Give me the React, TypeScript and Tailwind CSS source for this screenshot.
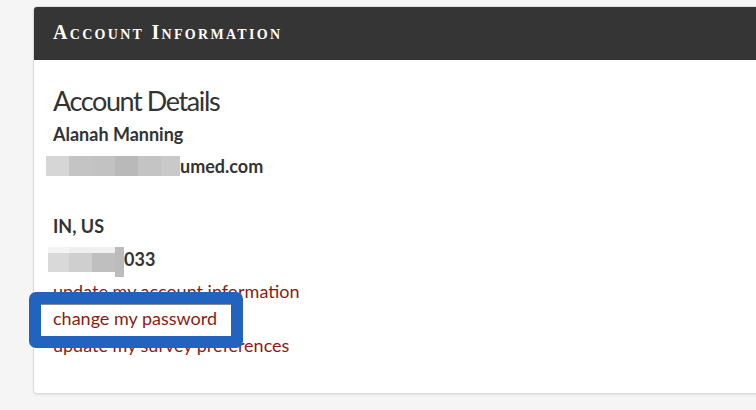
const sans = "font-['Lato','Liberation_Sans',sans-serif]";

const Pixels = ({ cols }: { cols: string[] }) => (
  <span className="inline-flex">
    {cols.map((c, i) => (
      <span key={i} className="h-[20px] w-[23px]" style={{ backgroundColor: c }} />
    ))}
  </span>
);

export default function App() {
  return (
    <div className={`relative h-[410px] w-full overflow-hidden bg-[#f5f5f5] pl-[33px] pt-[6px] ${sans}`}>
      <div className="w-[760px] rounded-[4px] border border-[#dcdcdc] bg-white shadow-[0_1px_2px_rgba(0,0,0,0.08)]">
        <div className="flex h-[53px] items-center rounded-t-[3px] bg-[#353535] pb-[3px] pl-[19px]">
          <h2 className="font-['Liberation_Serif',serif] text-[20px] font-bold tracking-[2.3px] text-white [font-variant:small-caps]">
            Account Information
          </h2>
        </div>
        <div className="h-[333px] pl-[19px] pt-[24px] text-[#333]">
          <h3 className="text-[27px] font-normal leading-[34px] tracking-[-1.4px] text-[#333]">Account Details</h3>
          <p className="text-[18px] font-bold leading-[32px]">Alanah Manning</p>
          <p className="flex items-center text-[18px] font-bold leading-[32px]">
            <span className="-ml-[7px] inline-flex">
              <Pixels cols={["#d6d6d6", "#c4c4c4", "#c2c2c2", "#b9b9b9", "#c4c4c4"]} />
              <span className="h-[20px] w-[19px] bg-[#c9c9c9]" />
            </span>
            <span>umed.com</span>
          </p>
          <p className="mt-[28px] text-[18px] font-bold leading-[32px]">IN, US</p>
          <p className="mt-[1px] flex items-center text-[18px] font-bold leading-[32px]">
            <span className="-ml-[5px] inline-flex h-[25px] items-start">
              <span className="flex h-[25px] w-[21px] flex-col"><span className="h-[6px] bg-[#f4f4f4]" /><span className="flex-1 bg-[#d9d9d9]" /></span>
              <span className="flex h-[25px] w-[23px] flex-col"><span className="h-[6px] bg-[#efefef]" /><span className="flex-1 bg-[#cfcfcf]" /></span>
              <span className="flex h-[25px] w-[23px] flex-col"><span className="h-[6px] bg-[#f0f0f0]" /><span className="flex-1 bg-[#bfbfbf]" /></span>
              <span className="h-[30px] w-[9px] bg-[#bcbcbc]" />
            </span>
            <span>033</span>
          </p>
          <div className="mt-[3px] flex flex-col text-[18px] leading-[27px] text-[#8b1b12]">
            <a href="#">update my account information</a>
            <a href="#">change my password</a>
            <a href="#">update my survey preferences</a>
          </div>
        </div>
      </div>
      <div className="absolute left-[29px] top-[292px] h-[56px] w-[214px] rounded-[7px] border-[12px] border-[#2163bf]">
        <div className="h-full w-full border-t border-[#8a8a8a]" />
      </div>
    </div>
  );
}
